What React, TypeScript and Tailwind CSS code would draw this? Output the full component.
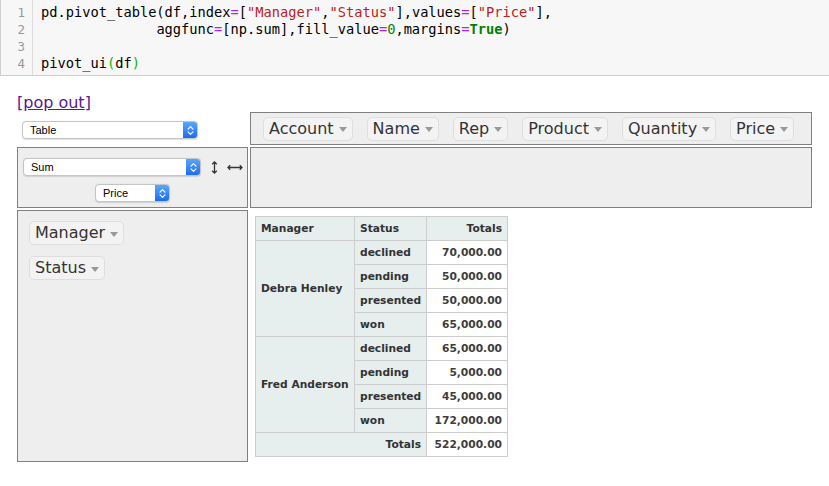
import React from "react";

// Jupyter cell: pivot_table + pivottable.js pivot_ui output

const mono = { fontFamily: '"DejaVu Sans Mono", "Liberation Mono", monospace' };

function Op({ children }: { children: React.ReactNode }) {
  return <span className="text-[#aa22ff]">{children}</span>;
}
function Str({ children }: { children: React.ReactNode }) {
  return <span className="text-[#ba2121]">{children}</span>;
}

function CodeCell() {
  const lines = [
    <>
      pd.pivot_table(df,index<Op>=</Op>[<Str>"Manager"</Str>,<Str>"Status"</Str>],values<Op>=</Op>[<Str>"Price"</Str>],
    </>,
    <>
      {"              "}aggfunc<Op>=</Op>[np.sum],fill_value<Op>=</Op>
      <span className="text-[#008800]">0</span>,margins<Op>=</Op>
      <span className="font-bold text-[#008000]">True</span>)
    </>,
    <>{" "}</>,
    <>
      pivot_ui<span className="text-[#00bb00]">(</span>df<span className="text-[#00bb00]">)</span>
    </>,
  ];
  return (
    <div className="flex border-b border-l border-[#cfcfcf] bg-[#f7f7f7]" style={mono}>
      <div className="w-[32px] shrink-0 border-r border-[#dddddd] pt-[4px] pb-[3px] pr-[7px] text-right text-[12.5px] leading-[17px] text-[#999999]">
        {lines.map((_, i) => (
          <div key={i}>{i + 1}</div>
        ))}
      </div>
      <div className="flex-1 pt-[4px] pb-[3px] pl-[8px] text-[13.7px] leading-[17px] whitespace-pre text-black">
        {lines.map((l, i) => (
          <div key={i}>{l}</div>
        ))}
      </div>
    </div>
  );
}

function MacSelect({ label, className }: { label: string; className: string }) {
  return (
    <div
      className={`flex h-[18px] items-stretch overflow-hidden rounded-[4px] border border-[#c4c4c4] bg-white shadow-[0_0.5px_1px_rgba(0,0,0,0.12)] ${className}`}
    >
      <span
        className="flex-1 truncate pl-[7px] text-[11px] leading-[16px] text-black"
        style={{ fontFamily: '"Liberation Sans", Arial, sans-serif' }}
      >
        {label}
      </span>
      <span className="flex w-[14px] items-center justify-center bg-linear-to-b from-[#5aa6fb] to-[#1b6cef]">
        <svg width="7" height="11" viewBox="0 0 7 11" aria-hidden>
          <path d="M1 4.2 3.5 1.7 6 4.2M1 6.8l2.5 2.5L6 6.8" fill="none" stroke="white" strokeWidth="1.2" strokeLinecap="round" strokeLinejoin="round" />
        </svg>
      </span>
    </div>
  );
}

function Triangle() {
  return (
    <svg width="8" height="5" viewBox="0 0 8 5" className="ml-[5px] mt-[2px]" aria-hidden>
      <path d="M0 0h8L4 5z" fill="#999999" />
    </svg>
  );
}

function Attr({ name }: { name: string }) {
  return (
    <span className="inline-flex h-[24px] items-center rounded-[5px] border border-[#dedede] bg-[#f3f3f3] px-[5px] text-[16px] leading-[18px] whitespace-nowrap text-[#333333]">
      {name}
      <Triangle />
    </span>
  );
}

type Row = { status: string; value: string };
const groups: { manager: string; rows: Row[] }[] = [
  {
    manager: "Debra Henley",
    rows: [
      { status: "declined", value: "70,000.00" },
      { status: "pending", value: "50,000.00" },
      { status: "presented", value: "50,000.00" },
      { status: "won", value: "65,000.00" },
    ],
  },
  {
    manager: "Fred Anderson",
    rows: [
      { status: "declined", value: "65,000.00" },
      { status: "pending", value: "5,000.00" },
      { status: "presented", value: "45,000.00" },
      { status: "won", value: "172,000.00" },
    ],
  },
];

const th = "border border-[#cdcdcd] bg-[#e6eeee] px-[5px] py-0 font-bold text-[#333333]";
const td = "border border-[#cdcdcd] bg-white px-[5px] py-0 text-right font-bold text-[#3d3d3d]";

function PivotTable() {
  return (
    <table className="w-[252px] table-fixed border-collapse text-[10.67px] leading-[13px]">
      <colgroup>
        <col className="w-[99px]" />
        <col className="w-[72px]" />
        <col className="w-[81px]" />
      </colgroup>
      <thead>
        <tr className="h-[24px]">
          <th className={`${th} text-left`}>Manager</th>
          <th className={`${th} text-left`}>Status</th>
          <th className={`${th} text-right`}>Totals</th>
        </tr>
      </thead>
      <tbody>
        {groups.map((g) =>
          g.rows.map((r, i) => (
            <tr key={g.manager + r.status} className="h-[24px]">
              {i === 0 && (
                <th rowSpan={g.rows.length} className={`${th} text-left align-middle`}>
                  {g.manager}
                </th>
              )}
              <th className={`${th} text-left`}>{r.status}</th>
              <td className={td}>{r.value}</td>
            </tr>
          )),
        )}
        <tr className="h-[24px]">
          <th colSpan={2} className={`${th} text-right`}>
            Totals
          </th>
          <td className={td}>522,000.00</td>
        </tr>
      </tbody>
    </table>
  );
}

export default function App() {
  const unused = ["Account", "Name", "Rep", "Product", "Quantity", "Price"];
  return (
    <div className="min-h-[486px] w-[829px] overflow-hidden bg-white" style={{ fontFamily: '"DejaVu Sans", Verdana, sans-serif' }}>
      <CodeCell />
      <div className="pl-[17px]">
        <div className="mt-[18px] h-[18px] text-[16px] leading-[18px] text-[#551a8b]">
          [<span className="underline">pop out</span>]
        </div>
        <div className="grid grid-cols-[231px_562px] grid-rows-[33px_61px_252px] gap-x-[2px] gap-y-[2px]">
          {/* renderer */}
          <div className="pt-[9px] pl-[5px]">
            <MacSelect label="Table" className="w-[176px]" />
          </div>
          {/* unused attrs */}
          <div className="flex items-center gap-[14px] border border-[#808080] bg-[#eeeeee] pl-[12px]">
            {unused.map((a) => (
              <Attr key={a} name={a} />
            ))}
          </div>
          {/* aggregator */}
          <div className="flex flex-col border border-[#808080] bg-[#eeeeee] pt-[10px] pl-[5px]">
            <div className="flex items-center">
              <MacSelect label="Sum" className="w-[178px]" />
              <svg width="7" height="13" viewBox="0 0 7 13" className="ml-[10px]" aria-hidden>
                <path d="M3.5 1v11M1.2 3.2 3.5 1l2.3 2.2M1.2 9.8l2.3 2.2 2.3-2.2" fill="none" stroke="#333" strokeWidth="1.3" />
              </svg>
              <svg width="16" height="7" viewBox="0 0 16 7" className="ml-[9px]" aria-hidden>
                <path d="M1 3.5h14M3.2 1.2 1 3.5l2.2 2.3M12.8 1.2 15 3.5l-2.2 2.3" fill="none" stroke="#333" strokeWidth="1.3" />
              </svg>
            </div>
            <div className="mt-[8px] flex justify-center pr-[5px]">
              <MacSelect label="Price" className="w-[75px]" />
            </div>
          </div>
          {/* cols */}
          <div className="border border-[#808080] bg-[#eeeeee]" />
          {/* rows */}
          <div className="flex flex-col items-start gap-[11px] border border-[#808080] bg-[#eeeeee] pt-[10px] pl-[11px]">
            <Attr name="Manager" />
            <Attr name="Status" />
          </div>
          {/* output */}
          <div className="pt-[6px] pl-[5px]">
            <PivotTable />
          </div>
        </div>
      </div>
    </div>
  );
}
